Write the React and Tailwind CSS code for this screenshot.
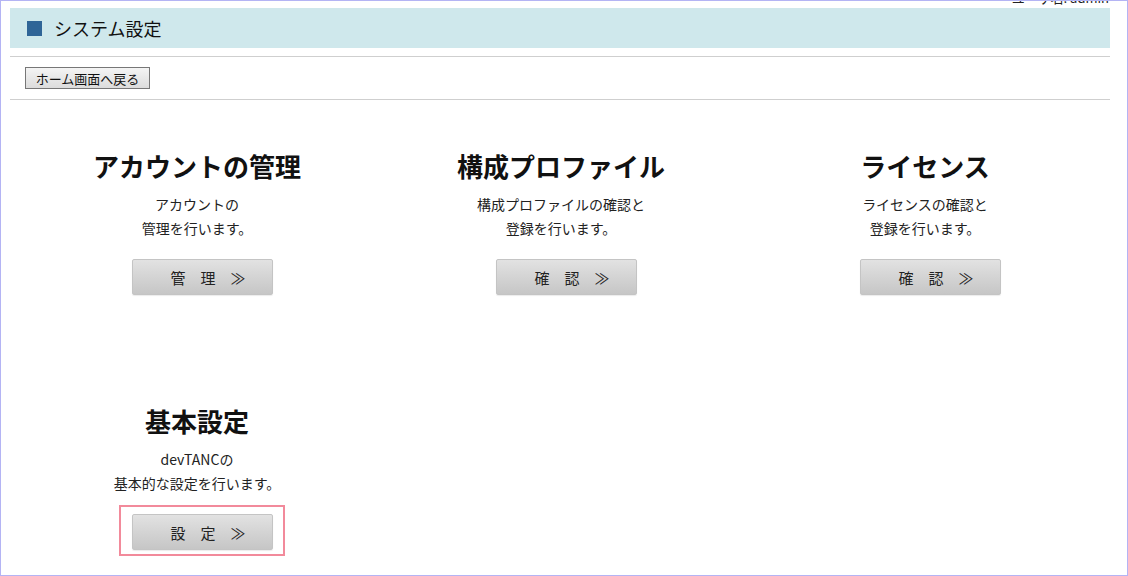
import React from 'react';

const FONT = '"Noto Sans CJK JP", "Liberation Sans", sans-serif';

const ITEMS = [
  { title: 'アカウントの管理', lines: ['アカウントの', '管理を行います。'], label: '管　理　≫' },
  { title: '構成プロファイル', lines: ['構成プロファイルの確認と', '登録を行います。'], label: '確　認　≫' },
  { title: 'ライセンス', lines: ['ライセンスの確認と', '登録を行います。'], label: '確　認　≫' },
  { title: '基本設定', lines: ['devTANCの', '基本的な設定を行います。'], label: '設　定　≫', focused: true },
];

const MenuCard = ({ title, lines, label, focused }) => (
  <div className="flex flex-col items-center">
    <h2 className="text-[26px] leading-[34px] font-bold text-[#111]">{title}</h2>
    <div className="mt-[9px] text-[14px] leading-[24px] text-[#222] text-center">
      {lines.map((l) => (
        <p key={l}>{l}</p>
      ))}
    </div>
    <div className="relative mt-[19px] ml-[10px] flex">
      {focused && (
        <div className="absolute left-[-13px] top-[-9px] w-[166px] h-[51px] border-2 border-[#f28a9b]" />
      )}
      <button
        type="button"
        className="relative w-[141px] h-[36px] pl-[12px] rounded-[2px] border border-[#c4c4c4] bg-gradient-to-b from-[#e2e2e2] to-[#c6c6c6] text-[15px] leading-[15px] text-[#222] shadow-[0_1px_1px_rgba(0,0,0,0.08)]"
      >
        {label}
      </button>
    </div>
  </div>
);

export default function App() {
  return (
    <div
      className="relative w-[1128px] h-[576px] overflow-hidden border border-[#b4b4f4] bg-white pl-[9px] pr-[17px] pt-[7px]"
      style={{ fontFamily: FONT }}
    >
      <div className="absolute right-[18px] top-[-11px] text-[13px] leading-[16px] text-[#222]">ユーザ名: admin</div>

      <div className="h-[40px] bg-[#cfe8ec] flex items-center pl-[17px] gap-[12px]">
        <span className="w-[15px] h-[15px] bg-[#2f6597]" />
        <span className="text-[18px] leading-[20px] text-[#111]">システム設定</span>
      </div>

      <div className="mt-[8px] border-t border-[#cfcfcf]" />
      <div className="flex pt-[10px] pb-[10px] pl-[15px]">
        <button
          type="button"
          className="h-[22px] w-[125px] border border-[#777] bg-gradient-to-b from-[#f4f4f4] to-[#dcdcdc] text-[13px] leading-[13px] text-[#111]"
        >
          ホーム画面へ戻る
        </button>
      </div>
      <div className="border-t border-[#cfcfcf]" />

      <div className="ml-[5px] mt-[49px] grid grid-cols-[364px_364px_364px] gap-y-[109px]">
        {ITEMS.map((it) => (
          <MenuCard key={it.title} {...it} />
        ))}
      </div>
    </div>
  );
}
